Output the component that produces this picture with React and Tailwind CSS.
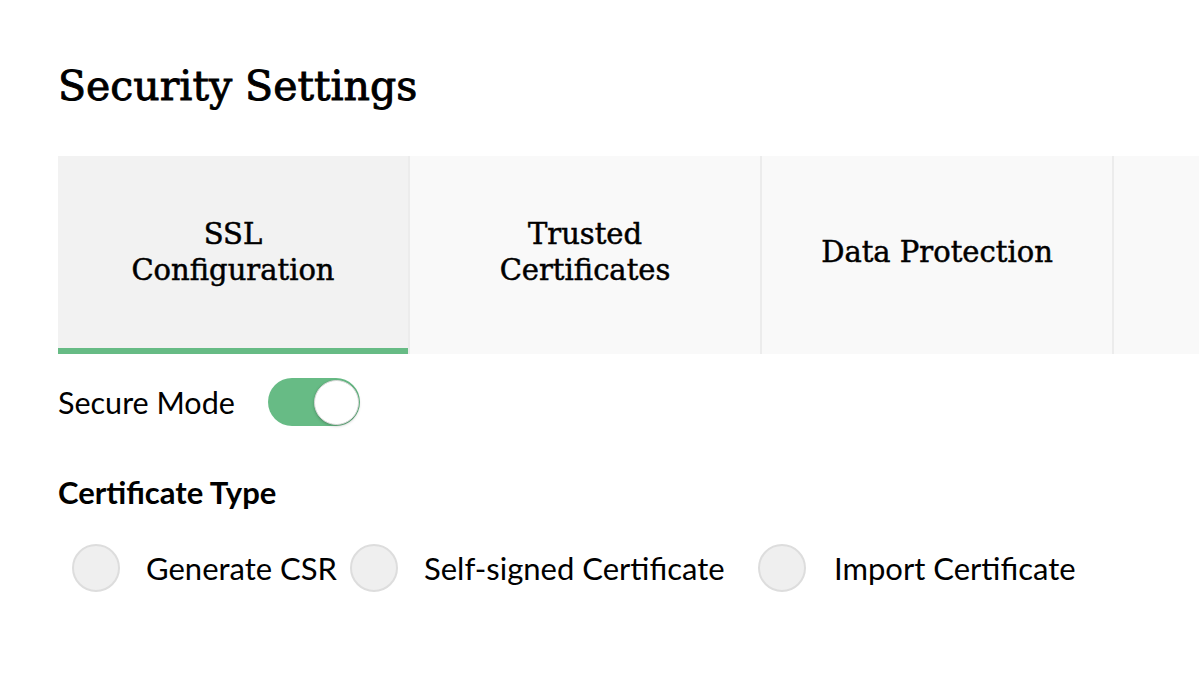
import { useState } from 'react';

const tabs = [
  { id: 'ssl', label: ['SSL', 'Configuration'] },
  { id: 'trusted', label: ['Trusted', 'Certificates'] },
  { id: 'data', label: ['Data Protection'] },
  { id: 'more', label: [''] },
];

const certTypes = [
  { id: 'csr', label: 'Generate CSR', w: 'w-[278px] gap-[26px]' },
  { id: 'self', label: 'Self-signed Certificate', w: 'w-[408px] gap-[26px]' },
  { id: 'import', label: 'Import Certificate', w: 'w-auto gap-[28px]' },
];

const serif = { fontFamily: '"DejaVu Serif", serif' };

const App = () => {
  const [activeTab, setActiveTab] = useState('ssl');
  const [secure, setSecure] = useState(true);
  const [certType, setCertType] = useState(null);

  return (
    <div className="min-h-[697px] w-full overflow-hidden bg-white text-black font-['Lato',sans-serif]">
      {/* Header */}
      <h1
        className="pl-[58px] pt-[57px] pb-[41px] text-[41px] leading-[58px] font-normal [-webkit-text-stroke:0.9px_black]"
        style={serif}
      >
        Security Settings
      </h1>

      {/* Tabs */}
      <div className="ml-[58px] flex">
        {tabs.map((tab) => {
          const active = tab.id === activeTab;
          return (
            <button
              key={tab.id}
              onClick={() => setActiveTab(tab.id)}
              className={`relative flex h-[198px] w-[352px] shrink-0 flex-col items-center justify-center border-r-2 border-[#ececec] pb-[6px] text-[29px] leading-[36px] font-normal [-webkit-text-stroke:0.5px_black] ${
                active ? 'bg-[#f2f2f2]' : 'bg-[#f9f9f9]'
              }`}
              style={serif}
            >
              {tab.label.map((line, i) => (
                <span key={i}>{line}</span>
              ))}
              {active && <span className="absolute bottom-0 left-0 h-[6px] w-[350px] bg-[#67bb85]" />}
            </button>
          );
        })}
      </div>

      {/* Secure mode */}
      <div className="mt-[24px] ml-[58px] flex items-center gap-[33px]">
        <span className="text-[30.5px] leading-[36px]">Secure Mode</span>
        <button
          onClick={() => setSecure(!secure)}
          className={`flex h-[48px] w-[92px] items-center rounded-full px-[1px] ${
            secure ? 'justify-end bg-[#67bb85]' : 'justify-start bg-[#e5e5e5]'
          }`}
        >
          <span className="h-[45px] w-[45px] rounded-full border border-[#d8d8d8] bg-white shadow-[0_1px_3px_rgba(0,0,0,0.25)]" />
        </button>
      </div>

      {/* Certificate type */}
      <h2 className="mt-[48px] ml-[58px] text-[31px] leading-[36px] font-bold">Certificate Type</h2>

      <div className="mt-[34px] ml-[72px] flex items-center">
        {certTypes.map((c) => (
          <label key={c.id} className={`flex shrink-0 cursor-pointer items-center ${c.w}`}>
            <span
              onClick={() => setCertType(c.id)}
              className="flex h-[48px] w-[48px] items-center justify-center rounded-full border-2 border-[#dddddd] bg-[#efefef]"
            >
              {certType === c.id && <span className="h-[20px] w-[20px] rounded-full bg-[#67bb85]" />}
            </span>
            <span className="text-[31px] leading-[36px]">{c.label}</span>
          </label>
        ))}
      </div>
    </div>
  );
};

export default App;
